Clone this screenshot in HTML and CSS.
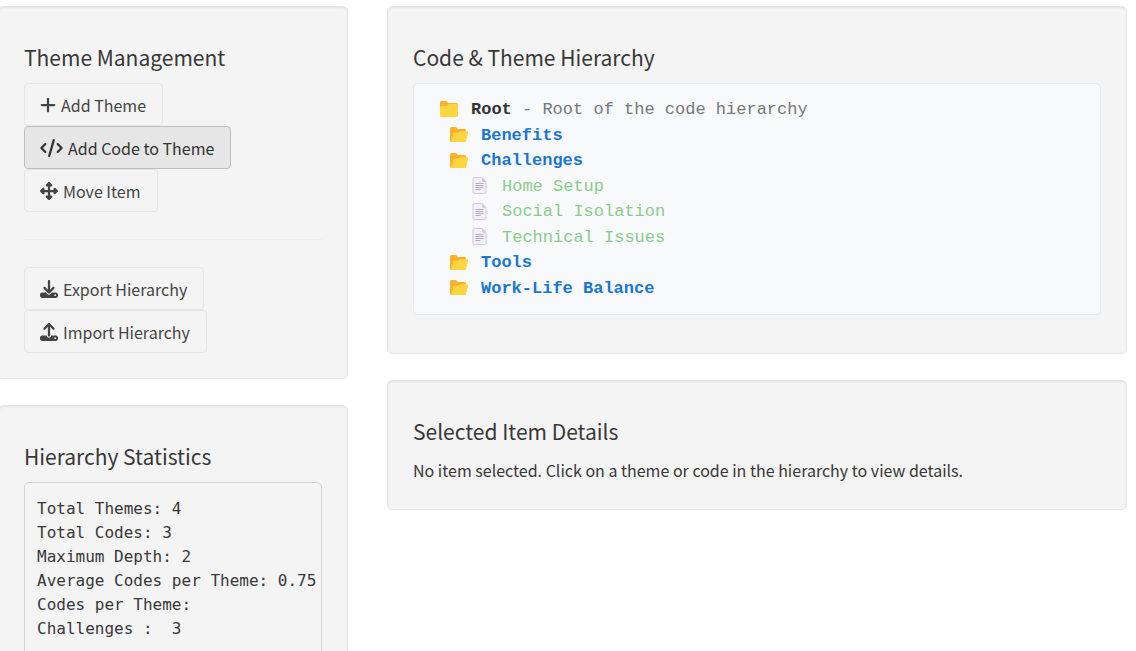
FILE: index.html
```html
<!DOCTYPE html>
<html lang="en">
<head>
    <meta charset="UTF-8">
    <meta name="viewport" content="width=device-width, initial-scale=1.0">
    <title>Code &amp; Theme Hierarchy</title>
    <link rel="stylesheet" href="styles.css">
</head>
<body>
    <!-- Tree icons, reused below -->
    <svg class="sprite" aria-hidden="true">
        <symbol id="folder" viewBox="0 0 18 18">
            <path fill="#ffb02e" d="M0 1.500C0 .7.7 0 1.500 0h4.300c.5 0 1 .2 1.300.6L8.300 2h8.200c.8 0 1.500.7 1.500 1.500V9H0z"/>
            <path fill="#fcd53f" d="M0 6.500C0 5.700.7 5 1.500 5h4.700c.5 0 .9-.2 1.200-.5l.9-.9c.3-.3.7-.5 1.100-.5h7.100c.8 0 1.500.7 1.500 1.500v9.900c0 .8-.7 1.500-1.500 1.500h-15C.7 16 0 15.300 0 14.500z"/>
        </symbol>
        <symbol id="folder-open" viewBox="0 0 18 18">
            <path fill="#ffb02e" d="M0 2.500c0-.8.7-1.500 1.500-1.500h3.800c.5 0 1 .2 1.300.6L7.800 3h6.700c.8 0 1.500.7 1.500 1.500V14L1.500 16C.7 16 0 15.300 0 14.500z"/>
            <path fill="#fcd53f" d="M3.200 8c.2-.8.9-1.300 1.700-1.300h2.700c.4 0 .8-.1 1.100-.4l.9-.7c.3-.2.7-.4 1.100-.4h5.900c1 0 1.600.8 1.400 1.700l-1.800 7.800c-.2.8-.8 1.300-1.600 1.300H1.500c-.3 0-.4-.2-.3-.5z"/>
        </symbol>
        <symbol id="page" viewBox="0 0 18 18">
            <path fill="#f3eef8" stroke="#d3cbdc" d="M2 1.500C2 .9 2.500.5 3.200.5h7.800l4 4V15.500c0 .6-.5 1-1.200 1H3.200c-.7 0-1.200-.4-1.200-1z"/>
            <path fill="#cdc4d6" d="M11 .5l4 4.200h-2.800c-.7 0-1.200-.5-1.200-1.200z"/>
            <path fill="none" stroke="#b4acbc" d="M4.500 6.500h8M4.500 8.500h8M4.500 10.500h8M4.500 12.500h5"/>
        </symbol>
    </svg>

    <div class="layout">
        <aside>
            <section class="well">
                <h4>Theme Management</h4>
                <div class="button-list">
                    <button type="button" class="btn">
                        <svg viewBox="0 0 448 512" class="icon icon-plus"><path d="M256 80c0-17.700-14.300-32-32-32s-32 14.300-32 32V224H48c-17.700 0-32 14.300-32 32s14.300 32 32 32H192V432c0 17.700 14.300 32 32 32s32-14.300 32-32V288H400c17.700 0 32-14.300 32-32s-14.300-32-32-32H256V80z"/></svg>
                        Add Theme
                    </button>
                    <button type="button" class="btn active">
                        <svg viewBox="0 0 640 512" class="icon icon-code"><path d="M392.800 1.200c-17-4.900-34.700 5-39.600 22l-128 448c-4.900 17 5 34.700 22 39.600s34.700-5 39.600-22l128-448c4.900-17-5-34.700-22-39.600zm80.600 120.100c-12.500 12.500-12.500 32.800 0 45.300L562.700 256l-89.400 89.400c-12.500 12.500-12.500 32.800 0 45.300s32.800 12.500 45.300 0l112-112c12.500-12.500 12.500-32.800 0-45.300l-112-112c-12.500-12.500-32.800-12.500-45.300 0zm-306.700 0c-12.500-12.500-32.800-12.500-45.300 0l-112 112c-12.500 12.500-12.500 32.800 0 45.300l112 112c12.500 12.500 32.800 12.500 45.300 0s12.500-32.800 0-45.300L77.300 256l89.400-89.400c12.500-12.500 12.500-32.800 0-45.300z"/></svg>
                        Add Code to Theme
                    </button>
                    <button type="button" class="btn">
                        <svg viewBox="0 0 512 512" class="icon"><path d="M278.600 9.400c-12.500-12.500-32.800-12.500-45.300 0l-64 64c-9.200 9.200-11.900 22.900-6.900 34.900s16.600 19.800 29.600 19.800h32v96H128V192c0-12.900-7.800-24.600-19.800-29.600s-25.700-2.200-34.900 6.900l-64 64c-12.500 12.500-12.500 32.800 0 45.300l64 64c9.200 9.200 22.900 11.900 34.900 6.900s19.800-16.600 19.800-29.600V288h96v96H192c-12.900 0-24.600 7.800-29.600 19.800s-2.200 25.700 6.900 34.900l64 64c12.500 12.500 32.800 12.500 45.300 0l64-64c9.200-9.200 11.900-22.900 6.900-34.900s-16.600-19.800-29.600-19.800H288V288h96v32c0 12.900 7.800 24.600 19.800 29.600s25.700 2.200 34.900-6.900l64-64c12.500-12.500 12.500-32.800 0-45.300l-64-64c-9.200-9.200-22.900-11.900-34.900-6.900s-19.800 16.600-19.800 29.600v32H288V128h32c12.900 0 24.600-7.800 29.600-19.800s2.200-25.700-6.900-34.900l-64-64z"/></svg>
                        Move Item
                    </button>
                </div>
                <hr>
                <div class="button-list">
                    <button type="button" class="btn">
                        <svg viewBox="0 0 512 512" class="icon"><path d="M288 32c0-17.700-14.300-32-32-32s-32 14.300-32 32V274.700l-73.400-73.400c-12.500-12.500-32.800-12.500-45.300 0s-12.500 32.800 0 45.300l128 128c12.500 12.500 32.800 12.500 45.300 0l128-128c12.500-12.500 12.500-32.800 0-45.300s-32.800-12.500-45.300 0L288 274.700V32zM64 352c-35.300 0-64 28.700-64 64v32c0 35.300 28.700 64 64 64H448c35.300 0 64-28.700 64-64V416c0-35.300-28.700-64-64-64H346.500l-45.300 45.300c-25 25-65.500 25-90.500 0L165.500 352H64zm368 56a24 24 0 1 1 0 48 24 24 0 1 1 0-48z"/></svg>
                        Export Hierarchy
                    </button>
                    <button type="button" class="btn">
                        <svg viewBox="0 0 512 512" class="icon"><path d="M288 109.300V352c0 17.700-14.300 32-32 32s-32-14.300-32-32V109.300l-73.400 73.400c-12.500 12.500-32.800 12.500-45.300 0s-12.500-32.800 0-45.300l128-128c12.500-12.500 32.800-12.500 45.300 0l128 128c12.500 12.500 12.500 32.800 0 45.300s-32.800 12.500-45.300 0L288 109.300zM64 352H192c0 35.300 28.700 64 64 64s64-28.700 64-64H448c35.300 0 64 28.700 64 64v32c0 35.300-28.700 64-64 64H64c-35.300 0-64-28.700-64-64V416c0-35.300 28.700-64 64-64zM432 456a24 24 0 1 0 0-48 24 24 0 1 0 0 48z"/></svg>
                        Import Hierarchy
                    </button>
                </div>
            </section>

            <section class="well">
                <h4>Hierarchy Statistics</h4>
                <pre class="stats">Total Themes: 4
Total Codes: 3
Maximum Depth: 2
Average Codes per Theme: 0.75
Codes per Theme:
Challenges :  3</pre>
            </section>
        </aside>

        <main>
            <section class="well">
                <h4>Code &amp; Theme Hierarchy</h4>
                <div class="tree">
                    <div class="node"><svg><use href="#folder"/></svg><span class="desc"><b class="root">Root</b> - Root of the code hierarchy</span></div>
                    <ul>
                        <li><div class="node theme"><svg><use href="#folder-open"/></svg>Benefits</div></li>
                        <li>
                            <div class="node theme"><svg><use href="#folder-open"/></svg>Challenges</div>
                            <ul class="codes">
                                <li class="node code"><svg><use href="#page"/></svg>Home Setup</li>
                                <li class="node code"><svg><use href="#page"/></svg>Social Isolation</li>
                                <li class="node code"><svg><use href="#page"/></svg>Technical Issues</li>
                            </ul>
                        </li>
                        <li><div class="node theme"><svg><use href="#folder-open"/></svg>Tools</div></li>
                        <li><div class="node theme"><svg><use href="#folder-open"/></svg>Work-Life Balance</div></li>
                    </ul>
                </div>
            </section>

            <section class="well">
                <h4>Selected Item Details</h4>
                <p>No item selected. Click on a theme or code in the hierarchy to view details.</p>
            </section>
        </main>
    </div>
</body>
</html>
```

FILE: styles.css
```css
* {
    box-sizing: border-box;
}
body {
    margin: 0;
    background-color: #fff;
    color: #383838;
    font-family: "Source Sans Pro", "Noto Sans CJK SC", sans-serif;
    font-size: 16px;
    overflow-x: hidden;
}
.sprite {
    display: none;
}
.layout {
    display: grid;
    grid-template-columns: minmax(0, 35fr) minmax(0, 74fr);
    gap: 39px;
    align-items: start;
    margin: 6px 9px 0 -2px;
}
.well {
    margin-bottom: 26px;
    padding: 25px;
    background-color: #f4f4f4;
    border: 1px solid #e6e6e6;
    border-radius: 5px;
    box-shadow: inset 0 1px 2px rgba(0, 0, 0, 0.07);
}
h4 {
    margin: 13px 0;
    font-size: 21px;
    font-weight: 400;
    line-height: 25px;
}
p {
    margin: 0;
    line-height: 27px;
}
hr {
    margin: 27px 0;
    border: 0;
    border-top: 1px solid #eee;
}

/* Buttons */
.button-list {
    display: flex;
    flex-direction: column;
    align-items: flex-start;
}
.btn {
    display: flex;
    align-items: center;
    gap: 5px;
    height: 43px;
    padding: 0 16px 0 15px;
    background-color: #f4f4f4;
    border: 1px solid #e4e4e4;
    border-radius: 4px;
    color: #444;
    font-family: inherit;
    font-size: 16px;
    line-height: 24px;
    white-space: nowrap;
    cursor: pointer;
}
.btn:hover,
.btn.active {
    background-color: #e6e6e6;
    border-color: #bebebe;
    color: #333;
}
.icon {
    width: 18px;
    height: 18px;
    fill: currentColor;
}
.icon-plus {
    width: 16px;
}
.icon-code {
    width: 23px;
}

.stats {
    margin: 0 0 13px;
    padding: 14px 12px;
    border: 1px solid #d4d4d4;
    border-radius: 5px;
    font-family: Consolas, "DejaVu Sans Mono", monospace;
    font-size: 16px;
    line-height: 24px;
}

/* Hierarchy tree */
.tree {
    margin-bottom: 13px;
    padding: 13px 26px;
    background-color: #f8f9fb;
    border: 1px solid #e6e8ea;
    border-radius: 5px;
    font-family: "Courier New", "Liberation Mono", monospace;
    font-size: 17px;
    line-height: 1.5;
}
.tree ul {
    margin: 0;
    padding-left: 10px;
    list-style: none;
}
.tree .codes {
    padding-left: 21px;
}
.node {
    display: flex;
    align-items: center;
    gap: 13px;
    cursor: pointer;
}
.node svg {
    flex: none;
    width: 18px;
    height: 18px;
}
.root {
    color: #333;
}
.desc {
    color: #777;
}
.theme {
    color: #1976d2;
    font-weight: 700;
}
.code {
    color: #8bcb8e;
}
```
